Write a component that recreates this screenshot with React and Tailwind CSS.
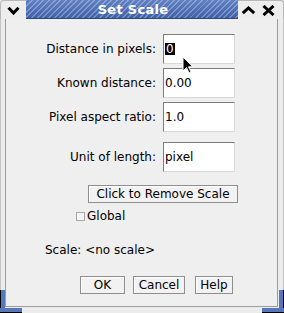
export default function App() {
  const inputCls =
    "h-[30px] w-[72px] bg-white border border-t-[#7c7c7c] border-l-[#7c7c7c] border-b-[#d8d8d8] border-r-[#d8d8d8] flex items-center pl-[1px] leading-none";
  const btnCls =
    "h-[18px] border border-[#8e8e8e] bg-[#f2f2f2] shadow-[inset_1px_1px_0_#ffffff] flex items-center justify-center leading-none";
  return (
    <div className="relative w-[284px] h-[313px] overflow-hidden bg-[#efefef] font-['DejaVu_Sans',sans-serif] text-[12px] text-black flex flex-col">
      {/* title bar */}
      <div className="h-[19px] flex shrink-0">
        <div className="w-[26px] bg-[#ededed] border-t border-l border-[#b8b8b8] rounded-tl-[4px] flex items-center justify-center">
          <svg width="13" height="9" viewBox="0 0 13 9">
            <polyline points="1.5,1.8 6.5,7 11.5,1.8" fill="none" stroke="#000" strokeWidth="3" />
          </svg>
        </div>
        <div className="flex-1 flex items-center justify-center border-b border-[#2c4680] bg-[repeating-linear-gradient(135deg,rgba(255,255,255,0.28)_0_1.4px,transparent_1.4px_4px),linear-gradient(#6181c4,#3f60a8)]">
          <span className="text-white font-bold text-[13px] leading-none tracking-[0.3px] pl-[2px]">Set Scale</span>
        </div>
        <div className="w-[21px] bg-[#ededed] border-t border-[#b8b8b8] flex items-center justify-center">
          <svg width="15" height="9" viewBox="0 0 15 9">
            <polyline points="1.8,7.2 7.5,2 13.2,7.2" fill="none" stroke="#000" strokeWidth="3" />
          </svg>
        </div>
        <div className="w-[18px] bg-[#ededed] border-t border-[#b8b8b8] flex items-center justify-center">
          <svg width="13" height="11" viewBox="0 0 13 11">
            <path d="M1.5,1 L11.5,10 M11.5,1 L1.5,10" fill="none" stroke="#000" strokeWidth="3" />
          </svg>
        </div>
        <div className="w-[7px] bg-[#ededed] border-t border-r border-[#b8b8b8] rounded-tr-[3px]" />
      </div>

      {/* body */}
      <div className="flex-1 flex">
        <div className="w-[5px] bg-[#ececec] border-l border-[#c4c4c4]" />
        <div className="flex-1 border-l border-r border-b border-[#9c9c9c] bg-[#efefef] flex flex-col">
          <div className="mt-[15px] grid grid-cols-[150px_72px] gap-x-[7px] items-center">
            <span className="text-right">Distance in pixels:</span>
            <div className={inputCls}>
              <span className="bg-black text-white h-[12px] flex items-center px-[1px]">0</span>
            </div>
            <div className="col-span-2 h-[4px]" />
            <span className="text-right">Known distance:</span>
            <div className={inputCls}>0.00</div>
            <div className="col-span-2 h-[4px]" />
            <span className="text-right">Pixel aspect ratio:</span>
            <div className={inputCls}>1.0</div>
            <div className="col-span-2 h-[10px]" />
            <span className="text-right">Unit of length:</span>
            <div className={inputCls}>pixel</div>
          </div>

          <div className="mt-[13px] ml-[82px] w-[150px]">
            <div className={btnCls}>Click to Remove Scale</div>
          </div>

          <div className="mt-[6px] ml-[70px] flex items-center h-[14px]">
            <span className="w-[9px] h-[9px] border border-[#a8a8a8] bg-[#f4f4f4]" />
            <span className="ml-[2px] leading-none">Global</span>
          </div>

          <div className="mt-[21px] ml-[39px] leading-none">Scale: &lt;no scale&gt;</div>

          <div className="mt-[20px] ml-[74px] flex gap-[8px]">
            <div className={btnCls + " w-[45px]"}>OK</div>
            <div className={btnCls + " w-[52px]"}>Cancel</div>
            <div className={btnCls + " w-[38px] ml-[2px]"}>Help</div>
          </div>
        </div>
        <div className="w-[6px] bg-[#ececec] border-r border-[#c4c4c4]" />
      </div>
      <div className="h-[6px] bg-[#ececec] shrink-0" />

      {/* blue corner accents */}
      <div className="absolute left-0 bottom-0 w-[22px] h-[23px] pointer-events-none">
        <div className="absolute left-0 top-0 w-[5px] h-[22px] bg-[#5577bb] border-l border-black" />
        <div className="absolute left-0 bottom-0 w-[22px] h-[5px] bg-[#5577bb] border-b border-black" />
      </div>
      <div className="absolute right-0 bottom-0 w-[22px] h-[23px] pointer-events-none">
        <div className="absolute right-0 top-0 w-[5px] h-[22px] bg-[#5577bb] border-r border-black" />
        <div className="absolute right-0 bottom-0 w-[22px] h-[5px] bg-[#5577bb] border-b border-black" />
      </div>

      {/* mouse cursor */}
      <svg className="absolute left-[182px] top-[56px]" width="13" height="19" viewBox="0 0 13 19">
        <path d="M1,1 L1,15 L4.5,11.5 L7,17 L9,16 L6.5,10.8 L11,10.8 Z" fill="#000" stroke="#fff" strokeWidth="1" />
      </svg>
    </div>
  );
}
